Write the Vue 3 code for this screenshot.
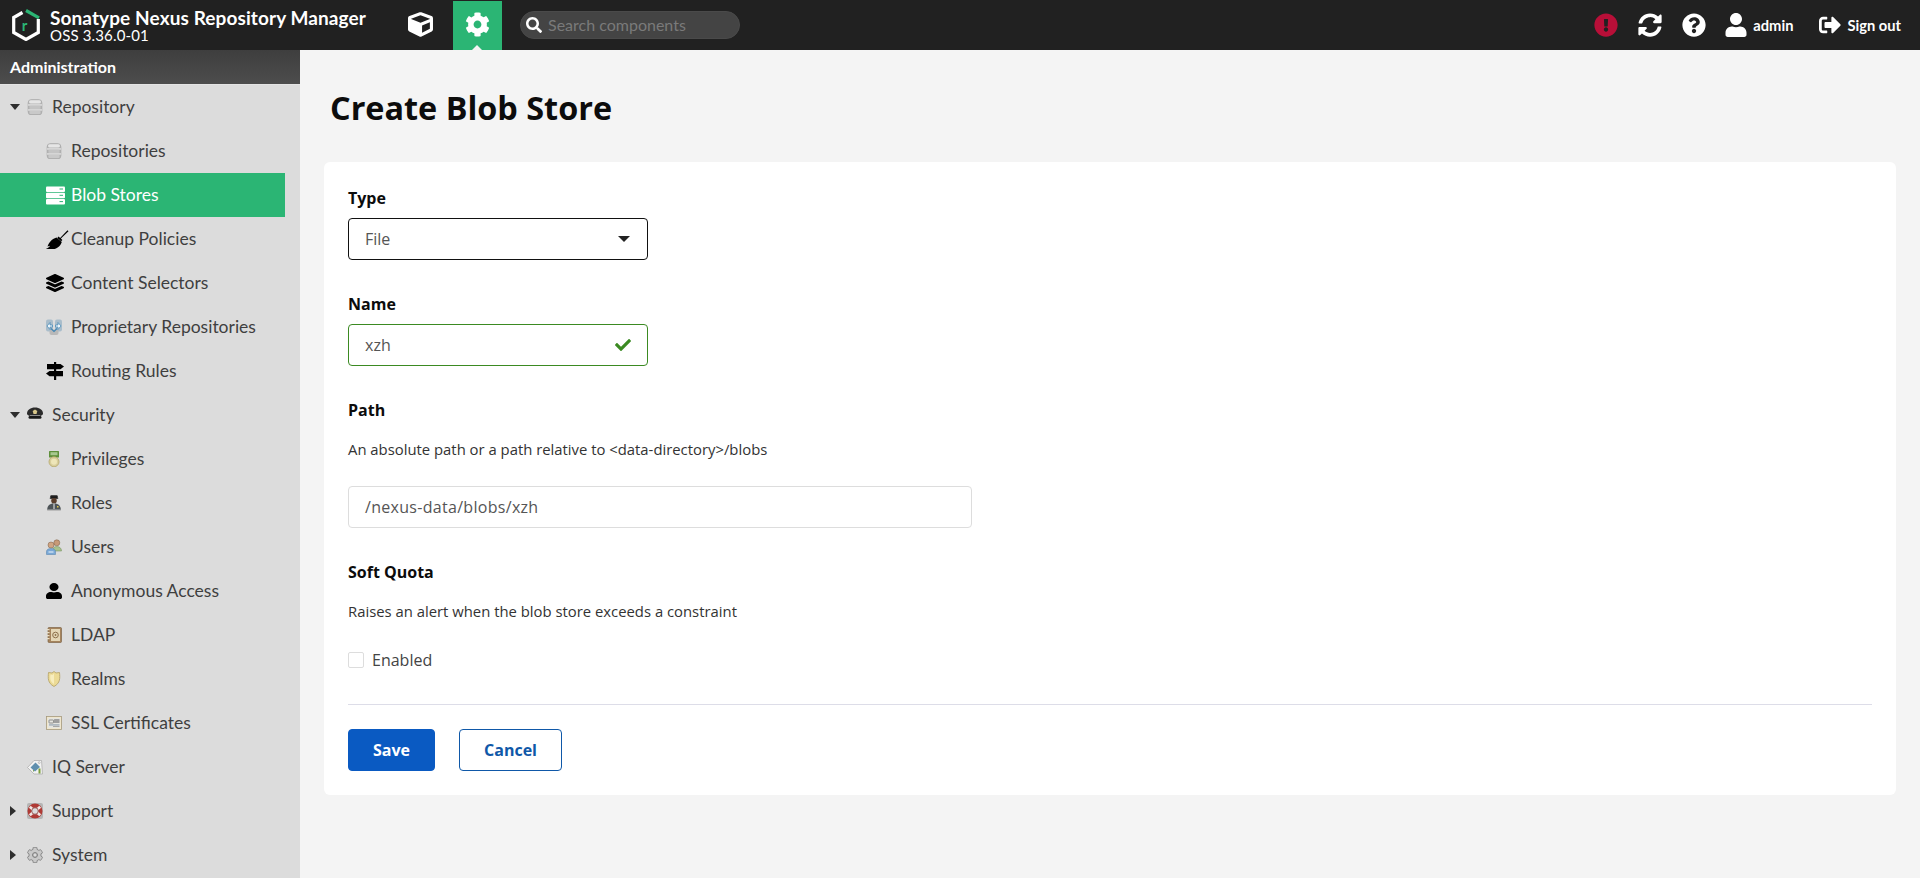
<script setup>
const P = (d, fill = 'currentColor', extra = {}) => ({ t: 'path', a: { d, fill, ...extra } })
const R = (x, y, width, height, fill, rx = 0, extra = {}) => ({ t: 'rect', a: { x, y, width, height, fill, rx, ...extra } })
const C = (cx, cy, r, fill, extra = {}) => ({ t: 'circle', a: { cx, cy, r, fill, ...extra } })

const fa = {
  cube: 'M239.1 6.3l-208 78c-18.7 7-31.1 25-31.1 45v225.1c0 18.2 10.3 34.8 26.5 42.9l208 104c13.5 6.8 29.4 6.8 42.9 0l208-104c16.3-8.1 26.5-24.8 26.5-42.9V129.3c0-20-12.4-37.9-31.1-44.9l-208-78C262 2.2 250 2.2 239.1 6.3zM256 68.4l192 72v1.1l-192 78-192-78v-1.1l192-72zm32 356V275.5l160-65v133.9l-160 80z',
  cog: 'M487.4 315.7l-42.6-24.6c4.3-23.2 4.3-47 0-70.2l42.6-24.6c4.9-2.8 7.1-8.6 5.5-14-11.1-35.6-30-67.8-54.7-94.6-3.8-4.1-10-5.1-14.8-2.3L380.8 110c-17.9-15.4-38.5-27.3-60.8-35.1V25.8c0-5.6-3.9-10.5-9.4-11.7-36.7-8.2-74.3-7.8-109.2 0-5.5 1.2-9.4 6.1-9.4 11.7V75c-22.2 7.9-42.8 19.8-60.8 35.1L88.7 85.5c-4.9-2.8-11-1.9-14.8 2.3-24.7 26.7-43.6 58.9-54.7 94.6-1.7 5.4.6 11.2 5.5 14L67.3 221c-4.3 23.2-4.3 47 0 70.2l-42.6 24.6c-4.9 2.8-7.1 8.6-5.5 14 11.1 35.6 30 67.8 54.7 94.6 3.8 4.1 10 5.1 14.8 2.3l42.6-24.6c17.9 15.4 38.5 27.3 60.8 35.1v49.2c0 5.6 3.9 10.5 9.4 11.7 36.7 8.2 74.3 7.8 109.2 0 5.5-1.2 9.4-6.1 9.4-11.7v-49.2c22.2-7.9 42.8-19.8 60.8-35.1l42.6 24.6c4.9 2.8 11 1.9 14.8-2.3 24.7-26.7 43.6-58.9 54.7-94.6 1.5-5.5-.7-11.3-5.6-14.1zM256 336c-44.1 0-80-35.9-80-80s35.9-80 80-80 80 35.9 80 80-35.9 80-80 80z',
  search: 'M505 442.7L405.3 343c-4.5-4.5-10.6-7-17-7H372c27.6-35.3 44-79.7 44-128C416 93.1 322.9 0 208 0S0 93.1 0 208s93.1 208 208 208c48.3 0 92.7-16.4 128-44v16.3c0 6.4 2.5 12.5 7 17l99.7 99.7c9.4 9.4 24.6 9.4 33.9 0l28.3-28.3c9.4-9.4 9.4-24.6.1-34zM208 336c-70.7 0-128-57.2-128-128 0-70.7 57.2-128 128-128 70.7 0 128 57.2 128 128 0 70.7-57.2 128-128 128z',
  alert: 'M504 256c0 136.997-111.043 248-248 248S8 392.997 8 256C8 119.083 119.043 8 256 8s248 111.083 248 248zm-248 50c-25.405 0-46 20.595-46 46s20.595 46 46 46 46-20.595 46-46-20.595-46-46-46zm-43.673-165.346l7.418 136c.347 6.364 5.609 11.346 11.982 11.346h48.546c6.373 0 11.635-4.982 11.982-11.346l7.418-136c.375-6.874-5.098-12.654-11.982-12.654h-63.383c-6.884 0-12.356 5.78-11.981 12.654z',
  sync: 'M370.72 133.28C339.458 104.008 298.888 87.962 255.848 88c-77.458.068-144.328 53.178-162.791 126.85-1.344 5.363-6.122 9.15-11.651 9.15H24.103c-7.498 0-13.194-6.807-11.807-14.176C33.933 94.924 134.813 8 256 8c66.448 0 126.791 26.136 171.315 68.685L463.03 40.97C478.149 25.851 504 36.559 504 57.941V192c0 13.255-10.745 24-24 24H345.941c-21.382 0-32.09-25.851-16.971-40.971l41.75-41.749zM32 296h134.059c21.382 0 32.09 25.851 16.971 40.971l-41.75 41.75c31.262 29.273 71.835 45.319 114.876 45.28 77.418-.07 144.315-53.144 162.787-126.849 1.344-5.363 6.122-9.15 11.651-9.15h57.304c7.498 0 13.194 6.807 11.807 14.176C478.067 417.076 377.187 504 256 504c-66.448 0-126.791-26.136-171.315-68.685L48.97 471.03C33.851 486.149 8 475.441 8 454.059V320c0-13.255 10.745-24 24-24z',
  help: 'M504 256c0 136.997-111.043 248-248 248S8 392.997 8 256C8 119.083 119.043 8 256 8s248 111.083 248 248zM262.655 90c-54.497 0-89.255 22.957-116.549 63.758-3.536 5.286-2.353 12.415 2.715 16.258l34.699 26.31c5.205 3.947 12.621 3.008 16.665-2.122 17.864-22.658 30.113-35.797 57.303-35.797 20.429 0 45.698 13.148 45.698 32.958 0 14.976-12.363 22.667-32.534 33.976C247.128 238.528 216 254.941 216 296v4c0 6.627 5.373 12 12 12h56c6.627 0 12-5.373 12-12v-1.333c0-28.462 83.186-29.647 83.186-106.667 0-58.002-60.165-102-116.531-102zM256 338c-25.365 0-46 20.635-46 46 0 25.364 20.635 46 46 46s46-20.636 46-46c0-25.365-20.635-46-46-46z',
  user: 'M224 256c70.7 0 128-57.3 128-128S294.7 0 224 0 96 57.3 96 128s57.3 128 128 128zm89.6 32h-16.7c-22.2 10.2-46.9 16-72.9 16s-50.6-5.8-72.9-16h-16.7C60.2 288 0 348.2 0 422.4V464c0 26.5 21.5 48 48 48h352c26.5 0 48-21.5 48-48v-41.6c0-74.2-60.2-134.4-134.4-134.4z',
  signout: 'M497 273L329 441c-15 15-41 4.5-41-17v-96H152c-13.3 0-24-10.7-24-24v-96c0-13.3 10.7-24 24-24h136V88c0-21.4 25.9-32 41-17l168 168c9.3 9.4 9.3 24.6 0 34zM192 436v-40c0-6.6-5.4-12-12-12H96c-17.7 0-32-14.3-32-32V160c0-17.7 14.3-32 32-32h84c6.6 0 12-5.4 12-12V76c0-6.6-5.4-12-12-12H96c-53 0-96 43-96 96v192c0 53 43 96 96 96h84c6.6 0 12-5.4 12-12z',
  check: 'M173.898 439.404l-166.4-166.4c-9.997-9.997-9.997-26.206 0-36.204l36.203-36.204c9.997-9.998 26.207-9.998 36.204 0L192 312.69 432.095 72.596c9.997-9.997 26.207-9.997 36.204 0l36.203 36.204c9.997 9.997 9.997 26.206 0 36.204l-294.4 294.401c-9.998 9.997-26.207 9.997-36.204-.001z',
  layers: 'M12.41 148.02l232.94 105.67c6.8 3.09 14.49 3.09 21.29 0l232.94-105.67c16.55-7.51 16.55-32.52 0-40.03L266.65 2.31a25.607 25.607 0 0 0-21.29 0L12.41 107.98c-16.55 7.51-16.55 32.53 0 40.04zm487.18 88.28l-58.09-26.33-161.64 73.27c-7.56 3.43-15.59 5.17-23.86 5.17s-16.29-1.74-23.86-5.17L70.51 209.97l-58.1 26.33c-16.55 7.5-16.55 32.5 0 40l232.94 105.59c6.8 3.08 14.49 3.08 21.29 0L499.59 276.3c16.55-7.5 16.55-32.5 0-40zm0 127.8l-57.87-26.23-161.86 73.37c-7.56 3.43-15.59 5.17-23.86 5.17s-16.29-1.74-23.86-5.17L70.29 337.87 12.41 364.1c-16.55 7.5-16.55 32.5 0 40l232.94 105.59c6.8 3.08 14.49 3.08 21.29 0L499.59 404.1c16.55-7.5 16.55-32.5 0-40z'
}

const icons = {
  db: [
    R(1, 0.5, 14, 15.5, '#b5b5b5', 3.5, { stroke: '#a0a0a0', 'stroke-width': 0.5 }),
    R(2, 1.2, 12, 3.2, '#e6e6e6', 1.6),
    R(1, 5.4, 14, 1.1, '#ececec'),
    R(1, 10.4, 14, 1.1, '#ececec'),
    R(2.5, 6.8, 11, 3.2, '#c4c4c4', 1),
    R(2.5, 11.8, 11, 3.2, '#c9c9c9', 1)
  ],
  server: [
    R(0, 0.5, 19, 5.5, '#fff', 1), R(0, 6.800, 19, 5.5, '#fff', 1), R(0, 13.100, 19, 5.5, '#fff', 1),
    R(13.500, 2.500, 3.500, 1, '#2bb574'), R(13.500, 8.800, 3.500, 1, '#2bb574'), R(13.500, 15.100, 3.500, 1, '#2bb574')
  ],
  broom: [
    P('M21.500 0.200l1 1-7.600 7.200 1.500 1.500-1.300 1.300-3.800-3.200 1.300-1.400 1.500 1.300z', '#000'),
    P('M10.500 7.500l5.300 4.600c-1 3-3.200 6-7.200 6.800-2.600.5-5.900.6-8.600-.200 2-.5 3.400-1.600 4-3l-2.500.9c1.300-3.700 4-7.500 9-9.100z', '#000')
  ],
  layers: [{ t: 'path', a: { d: fa.layers, fill: '#000', transform: 'scale(0.03516)' } }],
  prop: [
    R(0, 0.500, 7, 12, '#a9bdcb', 2), R(9, 0.500, 7, 12, '#a9bdcb', 2),
    R(3.500, 10.500, 9, 5.500, '#b9b9b9', 2),
    P('M1 7l3-3.500V6h2.500v2H4v2.500z', '#ecf4f9', { stroke: '#3f85b5', 'stroke-width': 0.7 }),
    P('M15 7l-3-3.500V6H9.500v2H12v2.500z', '#ecf4f9', { stroke: '#3f85b5', 'stroke-width': 0.7 }),
    P('M5 9.500L8 12.500l3-3', 'none', { stroke: '#3f85b5', 'stroke-width': 1.200 })
  ],
  routing: [
    R(8, 0, 2.200, 18, '#000'),
    P('M1 2h13.500l3.500 2.600-3.500 2.600H1z', '#000'),
    P('M17 9H3.500L0 11.600l3.500 2.600H17z', '#000')
  ],
  hat: [
    P('M0 6.500C0 3 3.500.500 8 .500S16 3 16 6.500c0 2-3 3-8 3s-8-1-8-3z', '#2b2b2b'),
    R(1.500, 9, 13, 2.800, '#191919', 1.400),
    R(3, 8, 10, 1, '#8c8c8c'),
    P('M8 2.500l2.300 1.500L9.500 7h-3L5.700 4z', '#d8c78a')
  ],
  medal: [
    R(3, 0, 10, 6.500, '#5e8f3a', 0.5),
    R(4.500, 1.200, 7, 3, '#a8c890'),
    C(8, 10.800, 5, '#d9cf9c', { stroke: '#b5a76a', 'stroke-width': 0.8 }),
    C(8, 10.800, 3, '#eee6b9')
  ],
  role: [
    R(4.200, 0.300, 7.600, 3, '#1f1f1f', 1.200),
    R(3.800, 2.700, 8.400, 1, '#111'),
    C(8, 5.700, 2.800, '#5a3d2b'),
    P('M1.200 15c0-4 2-6.500 6.800-6.500S14.800 11 14.800 15z', '#4d5357'),
    R(1.200, 14.500, 13.600, 1.400, '#b9b9b9'),
    R(7.500, 8.500, 1, 5.500, '#eee'),
    R(11, 11, 1.500, 1.500, '#e2c84c')
  ],
  users: [
    C(10.800, 3.800, 3, '#c79a77', { stroke: '#7b5a42', 'stroke-width': 0.5 }),
    P('M6.500 12c0-3 1.800-4.500 4.300-4.500S15.500 9 15.500 12z', '#a8c18c', { stroke: '#6d8a54', 'stroke-width': 0.5 }),
    C(5, 6, 3, '#d0a583', { stroke: '#7b5a42', 'stroke-width': 0.5 }),
    P('M0.500 15.500v-3C.5 10.500 2.500 9.500 5 9.500s4.500 1 4.500 3v3z', '#7aa8d6', { stroke: '#4f7ea9', 'stroke-width': 0.5 }),
    R(2.500, 12.500, 5, 1, '#eef5fb')
  ],
  person: [{ t: 'path', a: { d: fa.user, fill: '#000', transform: 'scale(0.03571 0.03125)' } }],
  ldap: [
    R(2, 0.500, 13.500, 15, '#a5835c', 1, { stroke: '#74593a', 'stroke-width': 0.6 }),
    R(5, 2, 9, 12, '#e4d6b5'),
    C(9.500, 8, 2.800, 'none', { stroke: '#8b6f4a', 'stroke-width': 1 }),
    C(9.500, 8, 0.900, '#8b6f4a'),
    R(0.500, 2, 3, 1.200, '#eadfc8'), R(0.500, 5, 3, 1.200, '#eadfc8'), R(0.500, 8, 3, 1.200, '#eadfc8'), R(0.500, 11, 3, 1.200, '#eadfc8')
  ],
  shield: [
    P('M8 .5L10 2l3.500-.5C14 7 14.500 12 8 15.500 1.500 12 2 7 2.500 1.500L6 2z', '#ecdb96', { stroke: '#b3a063', 'stroke-width': 0.8 }),
    P('M8 2.500V13C4 10.500 4 7 4.500 3.500L6.500 4z', '#f7edbe')
  ],
  cert: [
    R(0.500, 1.500, 15, 13, '#efe6cd', 0, { stroke: '#a69a7c', 'stroke-width': 0.8 }),
    R(2, 3, 12, 10, '#e5e5e0'),
    R(3, 5, 4.500, 3, 'none', 0.500, { stroke: '#6c6c6c', 'stroke-width': 0.7 }),
    R(8, 4, 5.500, 4, '#9f9f9f', 0.500),
    R(3, 9.500, 10.500, 0.900, '#7d90a4'),
    R(7, 11, 6.500, 0.900, '#a0a0a0')
  ],
  iq: [
    P('M0.500 8.500L7 1.500h7.500l1 13.500H7z', '#f2f2f2', { stroke: '#a8a8a8', 'stroke-width': 0.7 }),
    P('M3.500 8.500L8.500 3.500l4.500 4.500L8 12.500z', '#5f8fae'),
    R(6, 11, 1, 1.500, '#7fa35a'),
    R(11.500, 9.500, 2, 5, '#7d9f3c'),
    C(12.200, 3.600, 0.900, '#fff', { stroke: '#888', 'stroke-width': 0.5 })
  ],
  support: [
    R(0, 0, 16, 16, '#b5b5b5', 2),
    C(8, 8, 7.500, '#b03a35'),
    C(8, 8, 3.600, '#dcdcdc'),
    P('M2.800 3.800l2.800 2.400M13.200 3.800l-2.800 2.400M2.800 12.200l2.800-2.400M13.200 12.200l-2.800-2.400', 'none', { stroke: '#f0e6e4', 'stroke-width': 2.800 }),
    C(8, 8, 3.300, 'none', { stroke: '#7d2723', 'stroke-width': 0.7 })
  ],
  gear: [
    { t: 'path', a: { d: fa.cog, fill: '#c9c9c9', transform: 'scale(0.03125)', stroke: '#7d7d7d', 'stroke-width': 26 } },
    C(8, 8, 2.200, '#dcdcdc', { stroke: '#7d7d7d', 'stroke-width': 0.9 })
  ]
}

const nav = [
  { label: 'Repository', icon: 'db', depth: 0, caret: 'down' },
  { label: 'Repositories', icon: 'db', depth: 1 },
  { label: 'Blob Stores', icon: 'server', depth: 1, active: true },
  { label: 'Cleanup Policies', icon: 'broom', depth: 1 },
  { label: 'Content Selectors', icon: 'layers', depth: 1 },
  { label: 'Proprietary Repositories', icon: 'prop', depth: 1 },
  { label: 'Routing Rules', icon: 'routing', depth: 1 },
  { label: 'Security', icon: 'hat', depth: 0, caret: 'down' },
  { label: 'Privileges', icon: 'medal', depth: 1 },
  { label: 'Roles', icon: 'role', depth: 1 },
  { label: 'Users', icon: 'users', depth: 1 },
  { label: 'Anonymous Access', icon: 'person', depth: 1 },
  { label: 'LDAP', icon: 'ldap', depth: 1 },
  { label: 'Realms', icon: 'shield', depth: 1 },
  { label: 'SSL Certificates', icon: 'cert', depth: 1 },
  { label: 'IQ Server', icon: 'iq', depth: 0 },
  { label: 'Support', icon: 'support', depth: 0, caret: 'right' },
  { label: 'System', icon: 'gear', depth: 0, caret: 'right' }
]

const rowClass = (item) => [
  'row',
  item.depth === 1 ? 'row-child' : 'row-top',
  { 'row-active': item.active, 'row-nocaret': item.depth === 0 && !item.caret }
]
const boxes = { server: '0 0 19 19', broom: '0 0 23 19', layers: '0 0 18 18', routing: '0 0 18 18' }
const vbFor = (name) => boxes[name] || '0 0 16 16'
</script>

<template>
  <div class="app">
    <header class="topbar">
      <div class="brand">
        <svg class="logo" viewBox="0 0 28 32" aria-hidden="true">
          <path d="M10.500 3.500L1.700 8.500v15L14 30.500l12.300-7V10" fill="none" stroke="#fff" stroke-width="3.200" />
          <path d="M14 1.500L27 8.800" fill="none" stroke="#2bb574" stroke-width="3.200" />
          <text x="9.800" y="22" font-family="Lato, sans-serif" font-size="15" font-weight="700" fill="#2bb574">r</text>
        </svg>
        <div class="brand-text">
          <div class="brand-name">Sonatype Nexus Repository Manager</div>
          <div class="brand-version">OSS 3.36.0-01</div>
        </div>
      </div>
      <div class="mode-cube">
        <svg viewBox="0 0 512 512" class="ico-cube"><path :d="fa.cube" fill="#fff" /></svg>
      </div>
      <div class="mode-admin">
        <svg viewBox="0 0 512 512" class="ico-cog"><path :d="fa.cog" fill="#fff" /></svg>
        <span class="notch"></span>
      </div>
      <div class="search">
        <svg viewBox="0 0 512 512" class="ico-search"><path :d="fa.search" fill="#fff" /></svg>
        <span class="search-text">Search components</span>
      </div>
      <div class="top-actions">
        <svg viewBox="0 0 512 512" class="ico-top ico-alert"><path :d="fa.alert" fill="#b80f38" /></svg>
        <svg viewBox="0 0 512 512" class="ico-top ico-sync"><path :d="fa.sync" fill="#fff" /></svg>
        <svg viewBox="0 0 512 512" class="ico-top ico-help"><path :d="fa.help" fill="#fff" /></svg>
        <svg viewBox="0 0 448 512" class="ico-user"><path :d="fa.user" fill="#fff" /></svg>
        <span class="top-label top-admin">admin</span>
        <svg viewBox="0 0 512 512" class="ico-signout"><path :d="fa.signout" fill="#fff" /></svg>
        <span class="top-label">Sign out</span>
      </div>
    </header>

    <div class="body">
      <aside class="sidebar">
        <div class="side-head">Administration</div>
        <nav class="side-nav">
          <div v-for="item in nav" :key="item.label" :class="rowClass(item)">
            <span v-if="item.caret" :class="['caret', 'caret-' + item.caret]"></span>
            <svg :class="['nav-ico', 'ni-' + item.icon]" :viewBox="vbFor(item.icon)">
              <component :is="s.t" v-for="(s, i) in icons[item.icon]" :key="i" v-bind="s.a" />
            </svg>
            <span class="row-label">{{ item.label }}</span>
          </div>
        </nav>
      </aside>

      <main class="main">
        <h1 class="title">Create Blob Store</h1>
        <section class="card">
          <label class="label">Type</label>
          <div class="field field-select">
            <span>File</span>
            <span class="select-caret"></span>
          </div>

          <label class="label label-next">Name</label>
          <div class="field field-valid">
            <span>xzh</span>
            <svg viewBox="0 0 512 512" class="ico-check"><path :d="fa.check" fill="#3b8a22" /></svg>
          </div>

          <label class="label label-next">Path</label>
          <p class="desc">An absolute path or a path relative to &lt;data-directory&gt;/blobs</p>
          <div class="field field-wide">
            <span>/nexus-data/blobs/xzh</span>
          </div>

          <label class="label label-next">Soft Quota</label>
          <p class="desc">Raises an alert when the blob store exceeds a constraint</p>
          <div class="check-row">
            <span class="checkbox"></span>
            <span class="check-label">Enabled</span>
          </div>

          <div class="divider"></div>
          <div class="buttons">
            <button class="btn btn-primary" type="button">Save</button>
            <button class="btn btn-outline" type="button">Cancel</button>
          </div>
        </section>
      </main>
    </div>
  </div>
</template>

<style>
html, body { margin: 0; padding: 0; background: #f4f4f4; overflow: hidden; }
</style>

<style scoped>
.app { width: 1920px; height: 878px; display: flex; flex-direction: column; overflow: hidden; font-family: "Open Sans", sans-serif; }

.topbar { height: 50px; background: #212121; display: flex; align-items: center; color: #fff; flex: none; font-family: Lato, sans-serif; }
.brand { display: flex; align-items: center; padding-left: 12px; width: 408px; box-sizing: border-box; }
.logo { width: 28px; height: 32px; flex: none; }
.brand-text { margin-left: 10px; }
.brand-name { font-size: 19px; line-height: 20px; font-weight: 700; letter-spacing: 0.1px; white-space: nowrap; }
.brand-version { font-size: 15px; line-height: 15px; letter-spacing: 0.15px; white-space: nowrap; }
.mode-cube { width: 45px; flex: none; display: flex; }
.ico-cube { width: 25px; height: 25px; margin-top: -2px; }
.mode-admin { width: 49px; height: 49px; margin-top: 1px; background: #2bb574; flex: none; position: relative; display: flex; align-items: center; justify-content: center; }
.ico-cog { width: 25px; height: 25px; margin-top: -3px; }
.notch { position: absolute; left: 19px; bottom: 0; width: 0; height: 0; border-left: 5px solid transparent; border-right: 5px solid transparent; border-bottom: 5px solid #f4f4f4; }
.search { margin-left: 18px; width: 220px; height: 28px; box-sizing: border-box; background: #444; border: 1px solid #4a4a4a; border-radius: 14px; display: flex; align-items: center; padding-left: 5px; margin-top: -1px; }
.ico-search { width: 16px; height: 16px; flex: none; }
.search-text { margin-left: 6px; color: #7a7a7a; font-size: 16px; white-space: nowrap; }
.top-actions { margin-left: auto; display: flex; align-items: center; padding-right: 19px; }
.ico-top { width: 24px; height: 24px; flex: none; }
.ico-sync { margin-left: 20px; }
.ico-help { margin-left: 20px; }
.ico-user { width: 22px; height: 24px; margin-left: 19px; flex: none; }
.top-label { font-size: 14.700px; font-weight: 700; white-space: nowrap; }
.top-admin { margin-left: 6px; }
.ico-signout { width: 22px; height: 22px; margin-left: 26px; margin-right: 6px; flex: none; }

.body { flex: 1; display: flex; min-height: 0; }
.sidebar { width: 300px; flex: none; background: #dcdcdc; display: flex; flex-direction: column; font-family: Lato, sans-serif; }
.side-head { height: 34px; line-height: 34px; padding-left: 10px; color: #fff; font-size: 16px; font-weight: 700; background: linear-gradient(#3e3e3e, #4d4d4d); border-bottom: 1px solid #e4e4e4; }
.side-nav { width: 285px; }
.row { height: 44px; display: flex; align-items: center; color: #3f3f3f; font-size: 17.500px; white-space: nowrap; }
.row-label { margin-top: -2px; }
.row-top { padding-left: 10px; }
.row-nocaret { padding-left: 27px; }
.row-child { padding-left: 46px; }
.row-active { background: #2bb574; color: #fff; }
.caret { flex: none; width: 0; height: 0; }
.caret-down { border-left: 5px solid transparent; border-right: 5px solid transparent; border-top: 6px solid #2e2e2e; margin-right: 7px; }
.caret-right { border-top: 5px solid transparent; border-bottom: 5px solid transparent; border-left: 6px solid #2e2e2e; margin-right: 11px; }
.nav-ico { width: 16px; height: 16px; flex: none; margin-right: 9px; }
.ni-server { width: 19px; height: 19px; margin-right: 6px; }
.ni-broom { width: 23px; height: 19px; margin-right: 2px; }
.ni-layers, .ni-routing { width: 18px; height: 18px; margin-right: 7px; }

.main { flex: 1; padding: 0 24px; min-width: 0; }
.title { margin: 0; padding: 33px 0 0 6px; height: 80px; box-sizing: border-box; line-height: 48px; font-size: 32.400px; font-weight: 700; color: #0c0c0c; }
.card { margin-top: 32px; background: #fff; border-radius: 6px; padding: 24px; display: flex; flex-direction: column; align-items: flex-start; }
.label { display: block; font-size: 16px; line-height: 24px; font-weight: 700; color: #0c0c0c; }
.label-next { margin-top: 32px; }
.field { margin-top: 8px; width: 300px; height: 42px; box-sizing: border-box; border-radius: 4px; border: 1px solid #ddd; display: flex; align-items: center; justify-content: space-between; padding: 0 16px 1px; font-size: 16px; color: #555; background: #fff; }
.field-select { border-color: #111; padding-right: 17px; }
.select-caret { width: 0; height: 0; border-left: 6px solid transparent; border-right: 6px solid transparent; border-top: 6px solid #222; }
.field-valid { border-color: #3b8a22; padding-right: 16px; }
.ico-check { width: 16px; height: 16px; }
.field-wide { width: 624px; margin-top: 24px; letter-spacing: 0.3px; }
.desc { margin: 15px 0 1px; font-size: 14.850px; line-height: 24px; color: #333; }
.check-row { margin-top: 24px; height: 24px; display: flex; align-items: center; }
.checkbox { width: 16px; height: 16px; box-sizing: border-box; border: 1px solid #ddd; border-radius: 2px; background: #fff; }
.check-label { margin-left: 8px; font-size: 16px; color: #444; }
.divider { width: 100%; height: 1px; background: #dddde8; margin-top: 32px; }
.buttons { margin-top: 24px; display: flex; gap: 24px; }
.btn { height: 42px; box-sizing: border-box; border-radius: 4px; font-family: "Open Sans", sans-serif; font-size: 16px; font-weight: 700; padding: 0; cursor: pointer; }
.btn-primary { width: 87px; background: #0a5ac2; border: 1px solid #0a5ac2; color: #fff; }
.btn-outline { width: 103px; background: #fff; border: 1px solid #0f58a8; color: #0f58a8; }
</style>
